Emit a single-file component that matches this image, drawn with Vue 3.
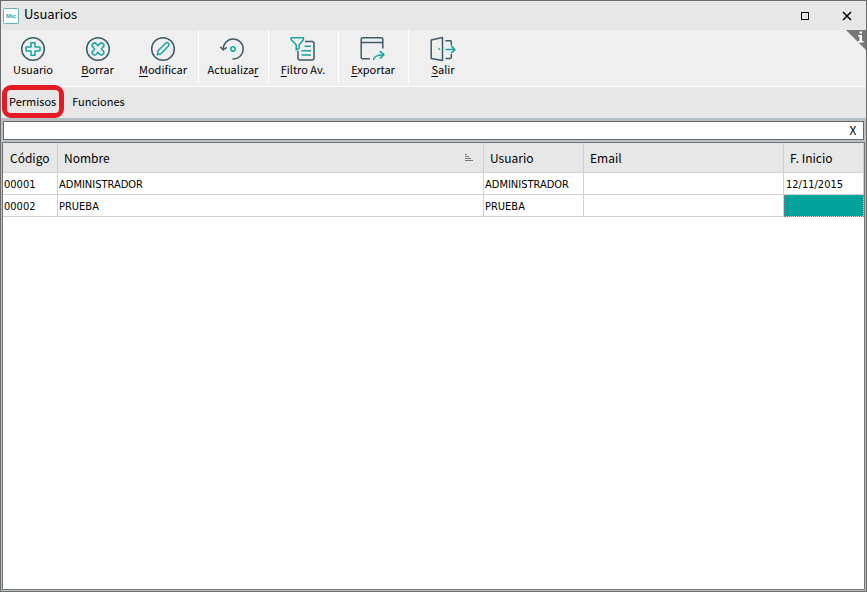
<script setup>
import { ref } from 'vue'

const query = ref('')
const tabs = ['Permisos', 'Funciones']
const actions = [
  { id: 'add', key: '', rest: 'Usuario' },
  { id: 'remove', key: 'B', rest: 'orrar' },
  { id: 'edit', key: 'M', rest: 'odificar' },
  { id: 'refresh', pre: 'Actualiza', key: 'r', rest: '' },
  { id: 'filter', key: 'F', rest: 'iltro Av.' },
  { id: 'export', key: 'E', rest: 'xportar' },
  { id: 'exit', key: 'S', rest: 'alir' },
]
const rows = [
  { code: '00001', name: 'ADMINISTRADOR', user: 'ADMINISTRADOR', email: '', start: '12/11/2015' },
  { code: '00002', name: 'PRUEBA', user: 'PRUEBA', email: '', start: '' },
]
</script>

<template>
  <main class="window">
    <header class="titlebar">
      <svg class="logo" viewBox="0 0 16 16" aria-hidden="true">
        <rect x="0.5" y="0.5" width="15" height="15" rx="1" fill="#fff" stroke="#5fb5b0" />
        <text x="8" y="10" text-anchor="middle" class="logo-text">Mic</text>
      </svg>
      <h1>Usuarios</h1>
      <button class="win-btn" type="button" aria-label="Maximizar">
        <svg viewBox="0 0 10 10" shape-rendering="crispEdges"><rect x="1.5" y="1.5" width="7" height="7" fill="none" stroke="#000" /></svg>
      </button>
      <button class="win-btn" type="button" aria-label="Cerrar">
        <svg viewBox="0 0 10 10"><path d="M1 1l8 8M9 1l-8 8" fill="none" stroke="#000" stroke-width="1.5" /></svg>
      </button>
    </header>

    <nav class="toolbar">
      <button v-for="a in actions" :key="a.id" type="button" class="tool" :class="'tool-' + a.id">
        <svg class="icon" viewBox="0 0 26 26" aria-hidden="true">
          <template v-if="a.id === 'add'">
            <circle class="dark" cx="13" cy="13" r="11.3" />
            <path class="teal" d="M11 6.7h4v4.300h4.300q.7 0 .7.7v2.600q0 .7-.7.7H15v4.300H11V15H6.700q-.7 0-.7-.7v-2.600q0-.7.7-.7H11z" />
          </template>
          <template v-else-if="a.id === 'remove'">
            <circle class="dark" cx="13" cy="13" r="11.3" />
            <path class="teal" d="M13 9.700l1.700-2q1.700-1.600 3.400 0q1.700 1.700 0 3.400L16.300 13l1.800 1.900q1.700 1.700 0 3.400q-1.700 1.600-3.400 0l-1.700-2l-1.700 2q-1.700 1.600-3.400 0q-1.700-1.700 0-3.400L9.700 13l-1.800-1.900q-1.700-1.700 0-3.400q1.700-1.600 3.400 0z" />
          </template>
          <template v-else-if="a.id === 'edit'">
            <circle class="dark" cx="13" cy="13" r="11.3" />
            <path class="teal" d="M7.300 18.800l.8-4 7.700-7.800q1.200-1 2.500.2q1.400 1.300.3 2.700l-7.600 7.900z" />
          </template>
          <template v-else-if="a.id === 'refresh'">
            <path class="dark" d="M3.200 13.500A10 10 0 1 1 12.500 23" />
            <path class="dark" d="M.2 10.700l3 3.300 3.600-2.700" />
            <circle class="teal" cx="13" cy="13" r="2.200" />
          </template>
          <template v-else-if="a.id === 'filter'">
            <path class="dark" d="M15 5.500h7q2 0 2 2v14.500q0 2-2 2H10q-2 0-2-2V15" />
            <path class="teal" d="M1.200 1.700h12.200v2L9.200 8.800v3.400l-3 1.800V8.800L1.200 3.700zM14.500 10.200H21M11.500 14.700H21M11.500 19H21" />
          </template>
          <template v-else-if="a.id === 'export'">
            <path class="dark" d="M10 22.700H2.500q-1.300 0-1.300-1.300V3q0-1.300 1.300-1.300h19q1.300 0 1.300 1.300v9.500M1.200 6.600h21.600" />
            <path class="teal" d="M13.500 24.300q0-5.300 10-5.600M19.700 15.200l4.300 3.500-4 3.900" />
          </template>
          <template v-else>
            <path class="dark" d="M1.200 4L12.500 1.500v23L1.200 22.500zM15.500 4.700h4.800q1 0 1 1v3.600M15.500 22.500h4.800q1 0 1-1v-3.600" />
            <path class="teal" d="M15.500 13.600h9M21.200 9.900l3.700 3.700-3.700 3.700M8.300 13h1.800" />
          </template>
        </svg>
        <span>{{ a.pre }}<u v-if="a.key">{{ a.key }}</u>{{ a.rest }}</span>
      </button>
      <button class="info" type="button" aria-label="Información">
        <svg viewBox="0 0 20 20" aria-hidden="true">
          <path d="M0 0h20v20z" fill="#777" />
          <path d="M13.500 1.500h2.500v2h-2.500zM12 5h4v6h1.500v1.500H12V11h1.500V6.500H12z" fill="#fff" />
        </svg>
      </button>
    </nav>

    <nav class="tabs">
      <button v-for="(t, i) in tabs" :key="t" type="button" class="tab" :class="{ marked: i === 0 }">{{ t }}</button>
    </nav>

    <section class="content">
      <div class="search">
        <input v-model="query" type="text" aria-label="Buscar" />
        <button type="button" aria-label="Limpiar búsqueda" @click="query = ''">X</button>
      </div>
      <div class="grid">
        <table>
          <colgroup>
            <col class="c-code" /><col /><col class="c-user" /><col class="c-email" /><col class="c-start" />
          </colgroup>
          <thead>
            <tr>
              <th scope="col">Código</th>
              <th scope="col">
                <div class="sorted">
                  Nombre
                  <svg viewBox="0 0 9 8" shape-rendering="crispEdges" aria-hidden="true">
                    <path d="M0 .5h2M0 2.500h4M0 4.500h6M0 6.500h8" stroke="#777" />
                  </svg>
                </div>
              </th>
              <th scope="col">Usuario</th>
              <th scope="col">Email</th>
              <th scope="col">F. Inicio</th>
            </tr>
          </thead>
          <tbody>
            <tr v-for="r in rows" :key="r.code">
              <td>{{ r.code }}</td>
              <td>{{ r.name }}</td>
              <td>{{ r.user }}</td>
              <td>{{ r.email }}</td>
              <td :class="{ selected: !r.start }">{{ r.start }}</td>
            </tr>
          </tbody>
        </table>
      </div>
    </section>
  </main>
</template>

<style>
body {
  margin: 0;
}
</style>

<style scoped>
* {
  box-sizing: border-box;
}
button {
  margin: 0;
  padding: 0;
  border: 0;
  background: none;
  color: inherit;
  font: inherit;
}
.window {
  display: flex;
  flex-direction: column;
  min-height: 100vh;
  border: 1px solid #6c6c6c;
  background: #e7e7e7;
  color: #000;
  font-family: "Noto Sans CJK SC", "Noto Sans", sans-serif;
  font-size: 11px;
}
.titlebar {
  display: flex;
  align-items: center;
  height: 29px;
  padding-left: 2px;
}
.logo {
  width: 16px;
  height: 16px;
}
.logo-text {
  font: bold 6px "Liberation Sans", sans-serif;
  fill: #35a5a0;
}
h1 {
  flex: 1;
  margin: 0 0 0 5px;
  font-size: 13px;
  line-height: 18px;
  padding-bottom: 4px;
  font-weight: 400;
}
.win-btn {
  display: flex;
  align-items: center;
  justify-content: center;
  width: 42px;
  height: 29px;
}
.win-btn:last-child {
  margin-right: -2px;
}
.win-btn svg {
  width: 10px;
  height: 10px;
}
.toolbar {
  position: relative;
  display: flex;
  height: 57px;
  padding-bottom: 3px;
  border-bottom: 1px solid #fff;
  background: #efefef;
}
.tool {
  display: flex;
  flex-direction: column;
  align-items: center;
  width: 65px;
  padding-top: 6px;
  line-height: 14px;
}
.tool u {
  text-underline-offset: 2px;
}
.tool-add {
  width: 64px;
}
.tool-edit {
  width: 66px;
  margin-right: 2px;
}
.tool-refresh,
.tool-filter,
.tool-export,
.tool-exit {
  width: 70px;
  border-left: 1px solid #fff;
  padding-right: 1px;
}
.icon {
  width: 26px;
  height: 26px;
}
.icon * {
  fill: none;
  stroke-width: 1.5;
  stroke-linejoin: round;
}
.dark {
  stroke: #3f5b68;
}
.teal {
  stroke: #16a59c;
}
.info {
  position: absolute;
  top: 0;
  right: 0;
  width: 20px;
  height: 20px;
}
.info svg {
  display: block;
}
.tabs {
  display: flex;
  height: 33px;
  border-bottom: 2px solid #b4bfc3;
}
.tab {
  position: relative;
  padding: 0 8px 4px;
}
.marked::after {
  content: "";
  position: absolute;
  inset: -2px 0 0 1px;
  border: 5px solid #e41b23;
  border-radius: 9px;
}
.content {
  flex: 1;
  display: flex;
  flex-direction: column;
  gap: 2px;
  padding: 1px;
  background: #b9c1c4;
}
.search {
  display: flex;
  height: 19px;
  margin: 0 1px;
  border: 1px solid #666;
  background: #fff;
}
.search input {
  flex: 1;
  min-width: 0;
  padding: 0 4px;
  border: 0;
  outline: 0;
  font: inherit;
}
.search button {
  width: 20px;
  padding-bottom: 2px;
  font-size: 12px;
  line-height: 14px;
}
.grid {
  flex: 1;
  border: 1px solid #707678;
  background: #fff;
}
table {
  width: 100%;
  table-layout: fixed;
  border-collapse: separate;
  border-spacing: 0;
}
.c-code {
  width: 55px;
}
.c-user {
  width: 100px;
}
.c-email {
  width: 200px;
}
.c-start {
  width: 80px;
}
th,
td {
  border-right: 1px solid #cdd2d4;
  border-bottom: 1px solid #cdd2d4;
  text-align: left;
  white-space: nowrap;
}
th {
  height: 30px;
  padding: 0 6px;
  background: #e7e7e7;
  font-size: 12px;
  line-height: 18px;
  font-weight: 400;
}
th:first-child {
  padding-left: 7px;
}
td {
  height: 22px;
  padding: 2px 1px 0;
  font-family: "DejaVu Sans Condensed", "DejaVu Sans", sans-serif;
  font-size: 11px;
  line-height: 14px;
}
td:last-child {
  padding-left: 2px;
}
.sorted {
  display: flex;
  align-items: center;
  justify-content: space-between;
}
.sorted svg {
  width: 9px;
  height: 8px;
  margin-right: 3px;
}
.selected {
  background: #00a39b;
  outline: 1px dotted #8b7f78;
  outline-offset: -1px;
}
</style>
